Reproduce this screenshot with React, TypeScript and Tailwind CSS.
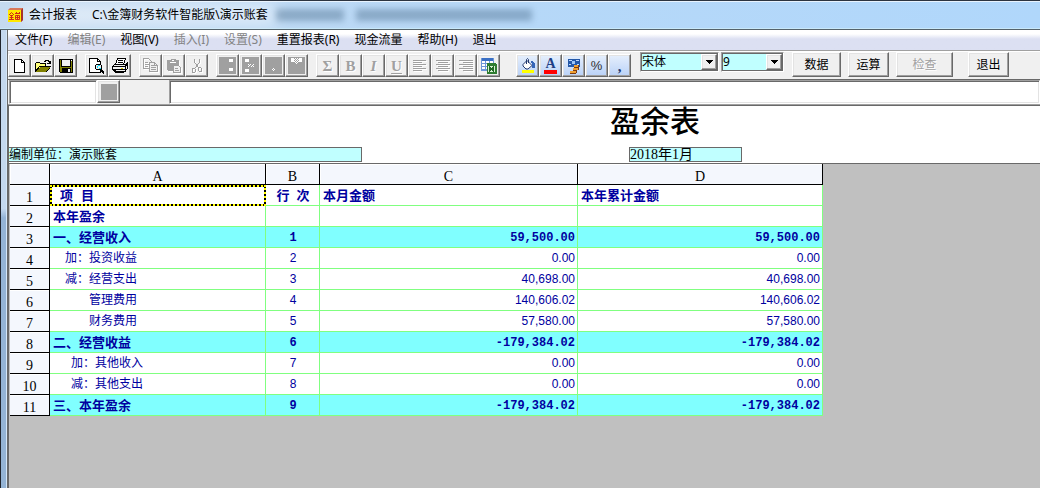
import type { ReactNode } from 'react';

type Row = {
  no: number;
  item: string;
  line?: string;
  month?: string;
  year?: string;
  indent?: string;
  total?: boolean;
  heading?: boolean;
};

const MENUS = [
  { label: '文件(F)' },
  { label: '编辑(E)', disabled: true },
  { label: '视图(V)' },
  { label: '插入(I)', disabled: true },
  { label: '设置(S)', disabled: true },
  { label: '重置报表(R)' },
  { label: '现金流量' },
  { label: '帮助(H)' },
  { label: '退出' },
];

const ROWS: Row[] = [
  { no: 2, item: '本年盈余', heading: true },
  { no: 3, item: '一、经营收入', line: '1', month: '59,500.00', year: '59,500.00', total: true },
  { no: 4, item: '加：投资收益', line: '2', month: '0.00', year: '0.00', indent: 'pl-3' },
  { no: 5, item: '减：经营支出', line: '3', month: '40,698.00', year: '40,698.00', indent: 'pl-3' },
  { no: 6, item: '管理费用', line: '4', month: '140,606.02', year: '140,606.02', indent: 'pl-9' },
  { no: 7, item: '财务费用', line: '5', month: '57,580.00', year: '57,580.00', indent: 'pl-9' },
  { no: 8, item: '二、经营收益', line: '6', month: '-179,384.02', year: '-179,384.02', total: true },
  { no: 9, item: '加：其他收入', line: '7', month: '0.00', year: '0.00', indent: 'pl-[18px]' },
  { no: 10, item: '减：其他支出', line: '8', month: '0.00', year: '0.00', indent: 'pl-[18px]' },
  { no: 11, item: '三、本年盈余', line: '9', month: '-179,384.02', year: '-179,384.02', total: true },
];

const RAISED =
  'border border-t-white border-l-white border-r-[#696969] border-b-[#696969] shadow-[inset_-1px_-1px_0_#a0a0a0,inset_1px_1px_0_#e3e3e3] bg-[#f0f0f0]';
const SUNKEN =
  'border border-t-[#a0a0a0] border-l-[#a0a0a0] border-r-white border-b-white shadow-[inset_1px_1px_0_#696969,inset_-1px_-1px_0_#e3e3e3]';
const SERIF = "font-['Liberation_Serif','Noto_Sans_CJK_SC',serif]";

function Tool({ label, children, disabled }: { label: string; children: ReactNode; disabled?: boolean }) {
  return (
    <button
      aria-label={label}
      disabled={disabled}
      className={`flex h-[23px] w-[23px] shrink-0 items-center justify-center ${RAISED}`}
    >
      {children}
    </button>
  );
}

function Pic({ children, engraved }: { children: ReactNode; engraved?: boolean }) {
  return (
    <svg
      className={`h-4 w-4 shrink-0 ${engraved ? 'drop-shadow-[1px_1px_0_#fff]' : ''}`}
      viewBox="0 0 16 16"
      fill="none"
      shapeRendering="crispEdges"
    >
      {children}
    </svg>
  );
}

function Glyph({ children, className = '' }: { children: ReactNode; className?: string }) {
  return (
    <span
      className={`font-['Liberation_Serif',serif] text-[15px] leading-4 font-bold text-[#a0a0a0] [text-shadow:1px_1px_0_#fff] ${className}`}
    >
      {children}
    </span>
  );
}

function Tinted({ children }: { children: ReactNode }) {
  return (
    <span className="flex h-[19px] w-[19px] items-center justify-center bg-linear-to-b from-[#e4eefc] to-[#bcd3f7]">
      {children}
    </span>
  );
}

// grey block with the white cut-outs passed as a path
function Block({ cut }: { cut: string }) {
  return (
    <svg className="h-[19px] w-[19px] shrink-0" viewBox="0 0 19 19" shapeRendering="crispEdges">
      <path d="M1 1h17v17H1z" fill="#a0a0a0" />
      <path d={cut} fill="#fff" />
    </svg>
  );
}

function AlignIcon({ d }: { d: string }) {
  return (
    <Pic engraved>
      <path d={d} stroke="#a0a0a0" />
    </Pic>
  );
}

function Group({ children, className = '' }: { children: ReactNode; className?: string }) {
  return <div className={`flex pt-[2px] ${className}`}>{children}</div>;
}

function Combo({ label, value, options, className }: { label: string; value: string; options: string[]; className: string }) {
  return (
    <div className={`relative h-5 ${SUNKEN} ${className}`}>
      <select
        aria-label={label}
        defaultValue={value}
        className="block h-full w-full appearance-none border border-[#696969] bg-[#c0ffff] text-xs leading-4 text-black outline-none"
      >
        {options.map((o) => (
          <option key={o}>{o}</option>
        ))}
      </select>
      <span
        className={`pointer-events-none absolute top-px right-px bottom-px flex w-4 items-center justify-center ${RAISED}`}
      >
        <svg className="h-1 w-[7px]" viewBox="0 0 7 4" shapeRendering="crispEdges">
          <path d="M0 0h7v1h-1v1h-1v1h-1v1h-1v-1h-1v-1h-1v-1h-1z" fill="#000" />
        </svg>
      </span>
    </div>
  );
}

function TextButton({ children, className, disabled }: { children: ReactNode; className: string; disabled?: boolean }) {
  return (
    <button
      disabled={disabled}
      className={`h-[25px] shrink-0 text-xs ${RAISED} ${className} ${
        disabled ? 'text-[#a0a0a0] [text-shadow:1px_1px_0_#fff]' : 'text-black'
      }`}
    >
      {children}
    </button>
  );
}

function TitleBar() {
  return (
    <header className="relative flex h-[30px] items-center overflow-hidden border-t border-b border-t-[#2c3440] border-b-[#55636b] bg-linear-to-r from-[#c5daf0] via-[#b6d8f8] to-[#b0d7fb] pl-2 text-xs text-black shadow-[inset_0_1px_0_#e8f3fe,inset_0_-1px_0_#c8e8fa]">
      <div className="absolute top-1 left-5 h-5 w-64 bg-white/50 blur-sm" />
      <svg className="relative mr-[6px] h-4 w-[15px]" viewBox="0 0 15 16">
        <path d="M0 3l2-2h13v12l-2 2z" fill="#d8785a" />
        <path d="M13 3l2-2v12l-2 2z" fill="#a8342c" />
        <path d="M0 3h13v12H0z" fill="#ffe800" />
        <path
          d="M3.500 5.500L1 8M3.500 5.500L6 8M2 8.500h3M1.500 10.500h4M3.500 8v4M1 12.500h5M7 6.500h5M8.500 5v2M11.500 5v2M7.500 8.500h4v4h-4zM7.500 10.500h4M9.500 8v4"
          stroke="#d02818"
          fill="none"
        />
      </svg>
      <h1 className="relative mr-[15px]">会计报表</h1>
      <span className="relative whitespace-nowrap">C:\金簿财务软件智能版\演示账套</span>
      <div className="ml-2 flex gap-3 opacity-45 blur-[3px]" aria-hidden="true">
        <div className="h-3 w-[68px] bg-[#4f7190]" />
        <div className="h-3 w-[176px] bg-[#4f7190]" />
      </div>
    </header>
  );
}

function Toolbar() {
  return (
    <div className="flex h-7 items-start border-t border-t-white bg-[#f0f0f0]">
      <Group className="mr-2">
        <Tool label="新建">
          <Pic>
            <path d="M2.500 1.500h7l3 3v10h-10z" fill="#fff" stroke="#000" />
            <path d="M9.500 1.500v3h3" stroke="#000" />
          </Pic>
        </Tool>
        <Tool label="打开">
          <Pic>
            <path d="M1 5h4l1 1h5v3H5l-3 5H1z" fill="#ffff7a" />
            <path d="M.500 14V5.500l1-1h3l1 1h5v3M.500 13.500l4-5h11l-4 5z" stroke="#000" />
            <path d="M1 13.500l4-4.500h10l-4 4.500z" fill="#808000" />
            <path d="M9 3h1V2h3v1h1v2M12 5h3V3" stroke="#000" />
          </Pic>
        </Tool>
        <Tool label="保存">
          <Pic>
            <path d="M1.500 1.500h13v13h-12l-1-1z" fill="#808000" stroke="#000" />
            <path d="M4 2h8v6H4z" fill="#f0f0f0" />
            <path d="M3.500 2v6.500h9V2" stroke="#000" />
            <path d="M4 10h9v4H4z" fill="#000" />
            <path d="M10 11h2v3h-2z" fill="#f0f0f0" />
            <path d="M13 2h1v1h-1z" fill="#fff" />
          </Pic>
        </Tool>
      </Group>
      <Group className="mr-2">
        <Tool label="打印预览">
          <Pic>
            <path d="M.500.500h8l3 3v11h-11z" fill="#fff" stroke="#000" />
            <path d="M8.500.500v3h3" stroke="#000" />
            <path d="M7.500 6.500h4l1 1v3l-1 1h-4l-1-1v-3z" fill="#f0f0f0" stroke="#000" />
            <path d="M8 8h1v2H8zM9 7h2v1H9zM10 10h2v1h-2z" fill="#00e0ff" />
            <path d="M12 11l3 3.500M11 12l4 3.500" stroke="#000" strokeWidth="1.500" />
          </Pic>
        </Tool>
        <Tool label="打印">
          <Pic>
            <path d="M5.500.500h8l-2 6h-8z" fill="#fff" stroke="#000" />
            <path d="M6 2.500h5M5.500 4.500h5" stroke="#000" />
            <path d="M.500 8.500l2-2h11l2-1.500v5l-2 3h-11l-2-2z" fill="#f0f0f0" stroke="#000" />
            <path d="M1 8.500h12v3H1M13.500 8l2-2M3.500 12v2.500h8l2-2" stroke="#000" />
            <path d="M9 10h2v1H9z" fill="#d8c800" />
          </Pic>
        </Tool>
      </Group>
      <Group className="mr-2">
        <Tool label="复制" disabled>
          <Pic engraved>
            <path d="M.500.500h5l3 3v7h-8z" stroke="#a0a0a0" />
            <path d="M2 4.500h3M2 6.500h4M2 8.500h3" stroke="#a0a0a0" />
            <path d="M6.500 4.500h5l3 3v6h-8z" fill="#f0f0f0" stroke="#a0a0a0" />
            <path d="M8 7.500h3M8 9.500h5M8 11.500h5M11.500 5v2.500H14" stroke="#a0a0a0" />
          </Pic>
        </Tool>
        <Tool label="粘贴" disabled>
          <Pic engraved>
            <path d="M1 2h3l1-1h4l1 1h3v5H7v6H2l-1-1z" fill="#a0a0a0" />
            <path d="M4 4h6v1H4zM6 2h2v1H6z" fill="#fff" />
            <path d="M7.500 7.500h5l2 2v5h-7z" fill="#f0f0f0" stroke="#a0a0a0" />
            <path d="M9 10.500h3M9 12.500h4" stroke="#a0a0a0" />
          </Pic>
        </Tool>
        <Tool label="剪切" disabled>
          <Pic engraved>
            <path d="M5.500 1v3l4 6M10.500 1v3l-4 6" stroke="#a0a0a0" />
            <path d="M3.500 10.500h2l1 1v2l-1 1h-2v-4zM9.500 9.500h2l1 1v3h-2l-1-1z" stroke="#a0a0a0" />
          </Pic>
        </Tool>
      </Group>
      <Group className="mr-2">
        <Tool label="插入行" disabled>
          <Block cut="M11 3h4v3h-4zM11 12h4v3h-4z" />
        </Tool>
        <Tool label="删除行" disabled>
          <Block cut="M4 3h4v3H4zM4 13h4v3H4zM7 8h1v1H7zM9 8h1v1H9zM8 9h1v1H8zM11 9h1v1h-1zM10 10h1v1h-1zM7 10h1v1H7zM12 8h1v1h-1zM12 10h1v1h-1z" />
        </Tool>
        <Tool label="插入列" disabled>
          <Block cut="M9 12h1v1H9zM8 13h1v1H8zM10 13h1v1h-1zM9 14h1v1H9z" />
        </Tool>
        <Tool label="删除列" disabled>
          <Block cut="M4 2h3v4H4zM12 2h3v4h-3zM8 2h1v1H8zM10 2h1v1h-1zM7 3h1v1H7zM9 3h1v1H9zM11 3h1v1h-1zM8 4h1v1H8zM10 4h1v1h-1zM7 5h1v1H7zM9 5h1v1H9zM11 5h1v1h-1zM8 6h1v1H8zM10 6h1v1h-1zM9 7h1v1H9z" />
        </Tool>
      </Group>
      <Group className="mr-4">
        <Tool label="求和" disabled>
          <Glyph>Σ</Glyph>
        </Tool>
        <Tool label="粗体" disabled>
          <Glyph>B</Glyph>
        </Tool>
        <Tool label="斜体" disabled>
          <Glyph className="italic">I</Glyph>
        </Tool>
        <Tool label="下划线" disabled>
          <Glyph className="underline underline-offset-2">U</Glyph>
        </Tool>
        <Tool label="左对齐" disabled>
          <AlignIcon d="M1 2.500h13M1 4.500h9M1 6.500h13M1 8.500h9M1 10.500h13M1 12.500h9" />
        </Tool>
        <Tool label="居中" disabled>
          <AlignIcon d="M1 2.500h14M3 4.500h10M1 6.500h14M3 8.500h10M1 10.500h14M3 12.500h10" />
        </Tool>
        <Tool label="右对齐" disabled>
          <AlignIcon d="M1 2.500h14M5 4.500h10M1 6.500h14M5 8.500h10M1 10.500h14M5 12.500h10" />
        </Tool>
        <Tool label="导出">
          <Pic>
            <path d="M0 0h13v13H0z" fill="#fff" />
            <path d="M0 0h13v3H0z" fill="#3a6fc4" />
            <path d="M.500 0v12.500H7M4.500 3v10M8.500 3v3M12.500 0v6M0 5.500h13M0 8.500h7M0 11.500h7" stroke="#6c97d8" />
            <path d="M6 5h8l2 2v9H6z" fill="#2f7d32" />
            <path d="M7 8h7v6H7z" fill="#d8f0d4" />
            <path d="M8 9l5 4M13 9l-5 4" stroke="#1f6a24" strokeWidth="2" />
          </Pic>
        </Tool>
      </Group>
      <Group className="mr-[9px]">
        <Tool label="填充颜色">
          <Tinted>
            <Pic>
              <path d="M3 6l4-4 5 5-4 4-3-1-2-2z" fill="#fff" />
              <path
                d="M3 6.500l4-4 5 5-4 3.500h-2l-3-3zM6.500 6V1.500l1-1 1 1V5"
                stroke="#22386e"
                shapeRendering="auto"
              />
              <path d="M11 3h2l2 3v4h-3V6z" fill="#3565b8" />
              <path d="M2 12h12v3H2z" fill="#ffff00" />
            </Pic>
          </Tinted>
        </Tool>
        <Tool label="字体颜色">
          <Tinted>
            <span className="flex h-4 w-[13px] flex-col items-center border-b-4 border-[#ff0000] font-['Liberation_Serif',serif] text-sm leading-3 font-bold text-[#1f3f86]">
              A
            </span>
          </Tinted>
        </Tool>
        <Tool label="货币">
          <Tinted>
            <Pic>
              <path d="M2 1h12v8H2z" fill="#2458a8" />
              <path d="M3 2h3v1H3zM10 2h3v1h-3zM3 6h2v1H3zM11 6h2v1h-2z" fill="#bcd8ff" />
              <path d="M6 3h3v3H6z" fill="#9cc4f8" />
              <path d="M8 7h4v2H8zM7 10h5v2H7zM4 13h6v2H4z" fill="#f0a030" />
              <path d="M8 9.500h4M12.500 7v5M7 12.500h4M4 15.500h6M10.500 13v2" stroke="#7a3c14" />
            </Pic>
          </Tinted>
        </Tool>
        <Tool label="百分比">
          <Tinted>
            <span className="font-['Liberation_Sans',sans-serif] text-[13px] leading-4 text-[#303030]">%</span>
          </Tinted>
        </Tool>
        <Tool label="千分位">
          <Tinted>
            <span className="font-['Liberation_Serif',serif] text-[15px] leading-4 font-bold text-[#22386e]">,</span>
          </Tinted>
        </Tool>
      </Group>
      <Combo label="字体" value="宋体" options={['宋体', '黑体', '楷体']} className="mr-[2px] w-[79px]" />
      <Combo label="字号" value="9" options={['9', '10', '12']} className="mr-2 w-[63px]" />
      <TextButton className="mr-[7px] w-[49px]">数据</TextButton>
      <TextButton className="mr-[7px] w-[41px]">运算</TextButton>
      <TextButton className="mr-[15px] w-[57px]" disabled>
        检查
      </TextButton>
      <TextButton className="w-[41px]">退出</TextButton>
    </div>
  );
}

const HEAD = 'border-r border-b border-black bg-[#f4f7fd] pt-[6px] text-center text-sm leading-[14px] font-normal text-black';

function RowHead({ children }: { children: ReactNode }) {
  return (
    <th scope="row" className={`shadow-[inset_0_1px_0_#fff] ${HEAD} ${SERIF}`}>
      {children}
    </th>
  );
}

const CELL = 'border-r border-b border-[#80ff80] pr-[2px] pl-[3px]';

function Sheet() {
  return (
    <table className="ml-px w-[813px] table-fixed border-separate border-spacing-0 text-xs text-[#0000a0]">
      <colgroup>
        <col className="w-10" />
        <col className="w-[216px]" />
        <col className="w-[54px]" />
        <col className="w-[258px]" />
        <col className="w-[245px]" />
      </colgroup>
      <thead>
        <tr className="h-[21px]">
          {['', 'A', 'B', 'C', 'D'].map((c) => (
            <th key={c} className={`shadow-[inset_1px_1px_0_#fff] ${HEAD} ${SERIF}`}>
              {c}
            </th>
          ))}
        </tr>
      </thead>
      <tbody className="bg-white">
        <tr className="h-[21px] text-[13px] leading-4 font-bold">
          <RowHead>1</RowHead>
          <td className="border-2 border-dotted border-[#ffff00] bg-black p-0">
            <div className="flex h-[17px] gap-2 bg-white pl-2 leading-4">
              <span>项</span>
              <span>目</span>
            </div>
          </td>
          <td className={`${CELL} text-center whitespace-pre`}>行{'  '}次</td>
          <td className={CELL}>本月金额</td>
          <td className={CELL}>本年累计金额</td>
        </tr>
        {ROWS.map((r) => {
          const strong = r.total || r.heading;
          const num = r.total
            ? "font-['Liberation_Mono',monospace] text-xs leading-4 pt-px"
            : "font-['Liberation_Sans',sans-serif] text-xs leading-4";
          return (
            <tr
              key={r.no}
              className={`h-[21px] ${r.total ? 'bg-[#80ffff]' : ''} ${strong ? 'text-[13px] leading-4 font-bold' : 'leading-4'}`}
            >
              <RowHead>{r.no}</RowHead>
              <td className={CELL}>
                <div className={r.indent}>{r.item}</div>
              </td>
              <td className={`${CELL} text-center ${num}`}>{r.line}</td>
              <td className={`${CELL} text-right ${num}`}>{r.month}</td>
              <td className={`${CELL} text-right ${num}`}>{r.year}</td>
            </tr>
          );
        })}
      </tbody>
    </table>
  );
}

export default function App() {
  return (
    <div className="flex min-h-screen flex-col overflow-hidden bg-[#c0c0c0] font-['Noto_Sans','Noto_Sans_CJK_SC',sans-serif]">
      <TitleBar />
      <div className="flex flex-1">
        <div className="w-[7px] shrink-0 border-r border-l border-l-[#20242c] border-r-[#d4e6f8] bg-linear-to-b from-[#c4d8ee] from-39% to-[#94b3d4] to-41%" />
        <main className="flex min-w-0 flex-1 flex-col border-l border-[#696969]">
          <nav className="flex h-[21px] items-center gap-[15px] border-b border-[#a0a0a0] bg-linear-to-b from-white from-20% to-[#dce0f2] to-45% pl-[7px] text-xs">
            {MENUS.map((m) => (
              <button
                key={m.label}
                disabled={m.disabled}
                className={`whitespace-nowrap ${m.disabled ? 'text-[#838383]' : 'text-black'}`}
              >
                {m.label}
              </button>
            ))}
          </nav>
          <Toolbar />
          <div className="flex h-[26px] items-start border-t border-b border-t-[#696969] border-b-[#a0a0a0] bg-[#f0f0f0]">
            <input aria-label="单元格" className={`ml-px h-6 w-[88px] bg-white px-1 text-xs ${SUNKEN}`} />
            <button
              aria-label="公式"
              className={`mr-[49px] flex h-[23px] w-[23px] items-center justify-center ${RAISED}`}
            >
              <span className="h-4 w-4 bg-[#a0a0a0]" />
            </button>
            <input aria-label="内容" className={`h-6 min-w-0 flex-1 bg-white px-1 text-xs ${SUNKEN}`} />
          </div>
          <section className="flex-1 border-t border-l border-[#696969]">
            <div className="border-b border-[#696969] bg-white text-black">
              <h2 className={`flex h-[41px] items-start pl-[601px] text-[30px] leading-8 font-medium ${SERIF}`}>
                盈余表
              </h2>
              <div className="flex pb-px">
                <div className="mr-[267px] h-[15px] w-[353px] overflow-hidden border border-l-0 border-[#696969] bg-[#c0ffff] text-xs leading-[13px]">
                  编制单位：演示账套
                </div>
                <div className={`h-[15px] w-[113px] border border-[#696969] bg-[#c0ffff] text-sm leading-[13px] ${SERIF}`}>
                  2018年1月
                </div>
              </div>
            </div>
            <Sheet />
          </section>
        </main>
      </div>
    </div>
  );
}
